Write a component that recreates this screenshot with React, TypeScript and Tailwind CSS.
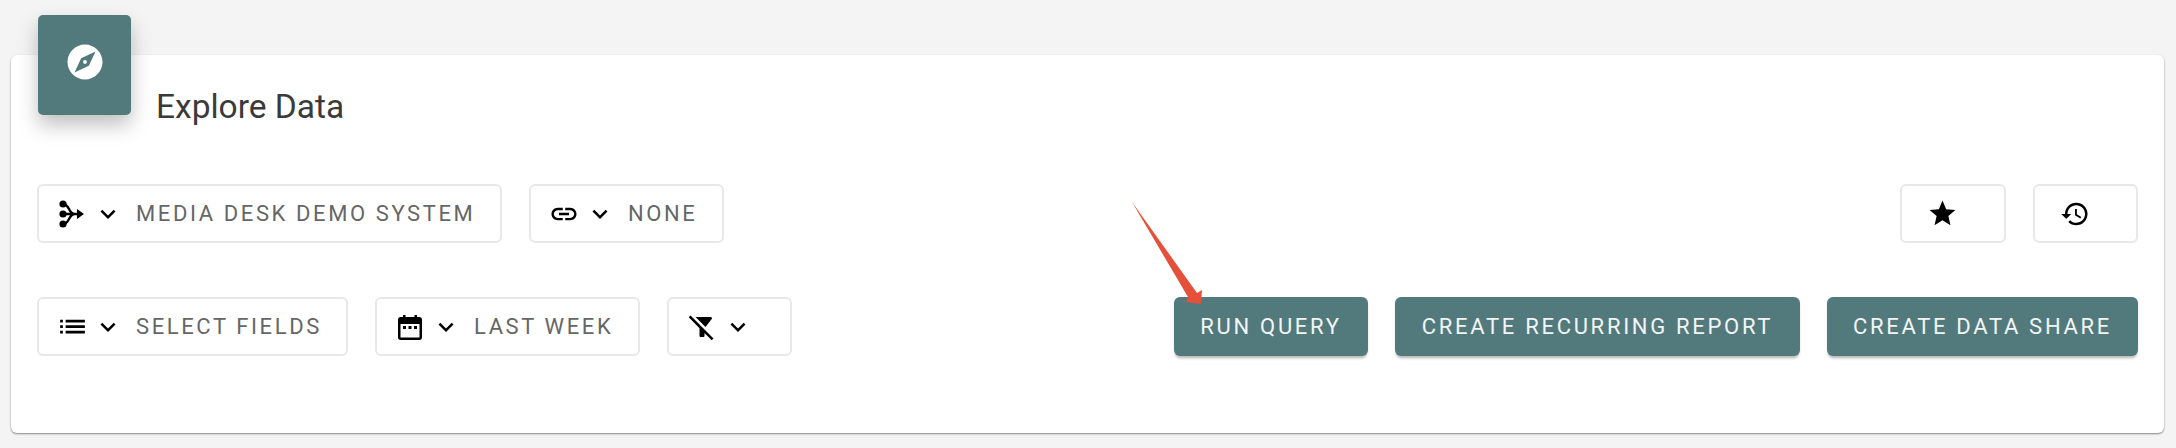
import { MdExplore, MdExpandMore, MdFilterAltOff, MdHistory, MdLink, MdList, MdStar } from "react-icons/md";
import { ReactNode } from "react";

const SourceIcon = () => (
  <svg viewBox="0 0 30 30" className="w-[30px] h-[30px]" fill="none" stroke="black" strokeWidth="2.4">
    <circle cx="6" cy="5" r="3.6" fill="black" stroke="none" />
    <circle cx="6" cy="15" r="3.6" fill="black" stroke="none" />
    <circle cx="6" cy="25" r="3.6" fill="black" stroke="none" />
    <path d="M6 5 C13 5 11 15 18 15 M6 25 C13 25 11 15 18 15 M6 15 H22" />
    <path d="M20 10 L27 15 L20 20 Z" fill="black" stroke="none" />
  </svg>
);

const CalendarIcon = () => (
  <svg viewBox="0 0 30 30" className="w-[30px] h-[30px]" fill="black">
    <path d="M8 3h2.500v2h9V3H22v2h2.500c1.400 0 2.500 1.100 2.500 2.500v18c0 1.400-1.100 2.500-2.500 2.500h-19C4.100 28 3 26.900 3 25.500v-18C3 6.100 4.100 5 5.500 5H8zM5.500 12v13.500h19V12z" />
    <path d="M8 14h3v3H8zM13.500 14h3v3h-3zM19 14h3v3h-3z" />
  </svg>
);

const SelectBox = ({
  icon,
  label,
  chevron = true,
  className,
}: {
  icon: ReactNode;
  label?: string;
  chevron?: boolean;
  className: string;
}) => (
  <button className={`h-[59px] flex items-center bg-white border-2 border-[#e8e8e8] rounded-[6px] ${className}`}>
    {icon}
    {chevron && <MdExpandMore className="ml-[6px] text-[30px] text-black" />}
    {label && <span className="ml-[13px] text-[22px] tracking-[2.600px] text-[#666]">{label}</span>}
  </button>
);

const ActionButton = ({ label, className }: { label: string; className: string }) => (
  <button className={`flex items-center justify-center bg-[#527a7d] text-[#f2f5f5] text-[22px] tracking-[2.700px] h-[59px] rounded-[6px] shadow-[0_3px_3px_-1px_rgba(0,0,0,0.3)] ${className}`}>
    {label}
  </button>
);

export default function App() {
  return (
    <div className="w-[2176px] h-[448px] bg-[#f4f4f4] pt-[55px] pl-[11px] pr-[12px] font-['Roboto',sans-serif]">
      <div className="relative h-[378px] bg-white rounded-[6px] shadow-[0_1px_2px_rgba(0,0,0,0.45)] pl-[26px] pr-[26px]">
        <div className="flex items-start h-[129px]">
          <div className="-mt-[40px] ml-[1px] w-[93px] h-[100px] pb-[7px] bg-[#527a7d] rounded-[5px] flex items-center justify-center shadow-[0_10px_20px_rgba(0,0,0,0.25)]">
            <MdExplore className="text-[42px] text-white" />
          </div>
          <h1 className="ml-[25px] mt-[32px] text-[33.500px] leading-[40px] text-[#3a3a3a]">Explore Data</h1>
        </div>

        <div className="flex items-center">
          <SelectBox className="w-[465px] pl-[18px]" icon={<SourceIcon />} label="MEDIA DESK DEMO SYSTEM" />
          <SelectBox className="w-[195px] ml-[27px] pl-[18px]" icon={<MdLink className="text-[30px] text-black" />} label="NONE" />
          <SelectBox className="w-[106px] ml-auto pl-[25px]" chevron={false} icon={<MdStar className="text-[31px] text-black" />} />
          <SelectBox className="w-[105px] ml-[27px] pl-[25px]" chevron={false} icon={<MdHistory className="text-[30px] text-black" />} />
        </div>

        <div className="flex items-center mt-[54px]">
          <SelectBox className="w-[311px] pl-[18px]" icon={<MdList className="text-[33px] -mx-[1.500px] text-black" />} label="SELECT FIELDS" />
          <SelectBox className="w-[265px] ml-[27px] pl-[18px]" icon={<CalendarIcon />} label="LAST WEEK" />
          <SelectBox className="w-[125px] ml-[27px] pl-[18px]" icon={<MdFilterAltOff className="text-[30px] text-black" />} />
          <ActionButton className="w-[194px] ml-auto" label="RUN QUERY" />
          <ActionButton className="w-[405px] ml-[27px]" label="CREATE RECURRING REPORT" />
          <ActionButton className="w-[311px] ml-[27px]" label="CREATE DATA SHARE" />
        </div>

        <svg className="absolute left-[1108px] top-[135px] w-[100px] h-[120px]" viewBox="0 0 100 120">
          <path d="M13 12 L78 103 L83 100 L82 114 L67 112 L69 107 Z" fill="#e5503a" />
        </svg>
      </div>
    </div>
  );
}
